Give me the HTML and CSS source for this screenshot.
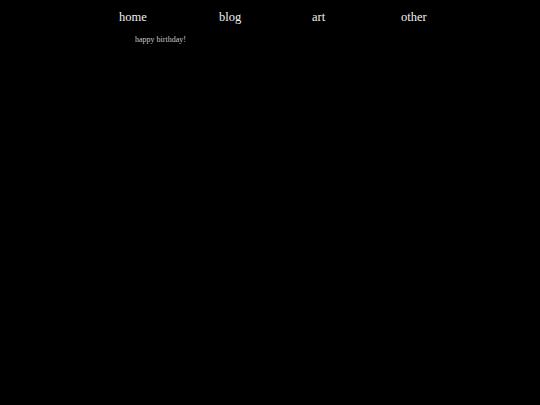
FILE: index.html
```html
<!DOCTYPE html>
<html>
<head>
<meta charset="utf-8">
<link rel="stylesheet" href="styles.css">
</head>
<body>
<nav class="nav">
  <a class="nav-link" href="#">home</a>
  <a class="nav-link" href="#">blog</a>
  <a class="nav-link" href="#">art</a>
  <a class="nav-link" href="#">other</a>
</nav>
<main class="content">
  <p class="note">happy birthday!</p>
</main>
</body>
</html>
```

FILE: styles.css
```css
html, body {
  margin: 0;
  padding: 0;
  background: #000;
  height: 100%;
}
body {
  font-family: "Liberation Serif", "DejaVu Serif", serif;
}
.nav {
  display: grid;
  grid-template-columns: 100px 93px 89px auto;
  padding: 9px 0 0 119px;
  font-size: 12.5px;
  line-height: 16px;
}
.nav-link {
  color: #f0f0f0;
  text-decoration: none;
}
.content {
  padding: 10px 0 0 135px;
}
.note {
  margin: 0;
  font-size: 8px;
  line-height: 10px;
  color: #c8c8c8;
}
```
